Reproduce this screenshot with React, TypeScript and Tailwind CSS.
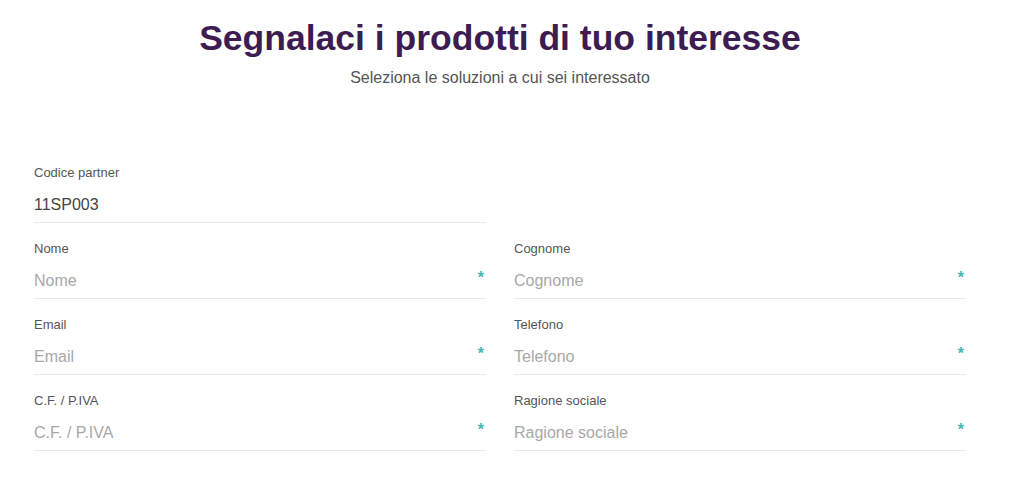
export default function App() {
  const Field = ({ label, placeholder, value, required }: { label: string; placeholder?: string; value?: string; required?: boolean }) => (
    <div className="flex flex-col">
      <label className="text-[13px] leading-[16px] text-[#555] pt-[1px]">{label}</label>
      <div className="flex items-center justify-between h-[36px] mt-[6px] border-b border-[#e8e8e8]">
        {value ? (
          <span className="text-[16px] text-[#444]">{value}</span>
        ) : (
          <span className="text-[16px] text-[#a8a8a8]">{placeholder}</span>
        )}
        {required && <span className="text-[16px] text-[#4db6ac] font-bold mr-[2px] mt-[-5px]">*</span>}
      </div>
    </div>
  );
  return (
    <div className="w-[1024px] h-[485px] bg-white font-['Liberation_Sans',Arial,sans-serif] overflow-hidden">
      <div className="flex flex-col items-center pt-[14px] pr-[24px]">
        <h1 className="text-[35.5px] leading-[48px] font-bold text-[#3d1c52]">Segnalaci i prodotti di tuo interesse</h1>
        <p className="text-[16px] leading-[20px] text-[#555] mt-[6px]">Seleziona le soluzioni a cui sei interessato</p>
      </div>
      <div className="ml-[34px] w-[932px] mt-[76px] grid grid-cols-2 gap-x-[28px] gap-y-[17px]">
        <Field label="Codice partner" value="11SP003" />
        <div />
        <Field label="Nome" placeholder="Nome" required />
        <Field label="Cognome" placeholder="Cognome" required />
        <Field label="Email" placeholder="Email" required />
        <Field label="Telefono" placeholder="Telefono" required />
        <Field label="C.F. / P.IVA" placeholder="C.F. / P.IVA" required />
        <Field label="Ragione sociale" placeholder="Ragione sociale" required />
      </div>
    </div>
  );
}
